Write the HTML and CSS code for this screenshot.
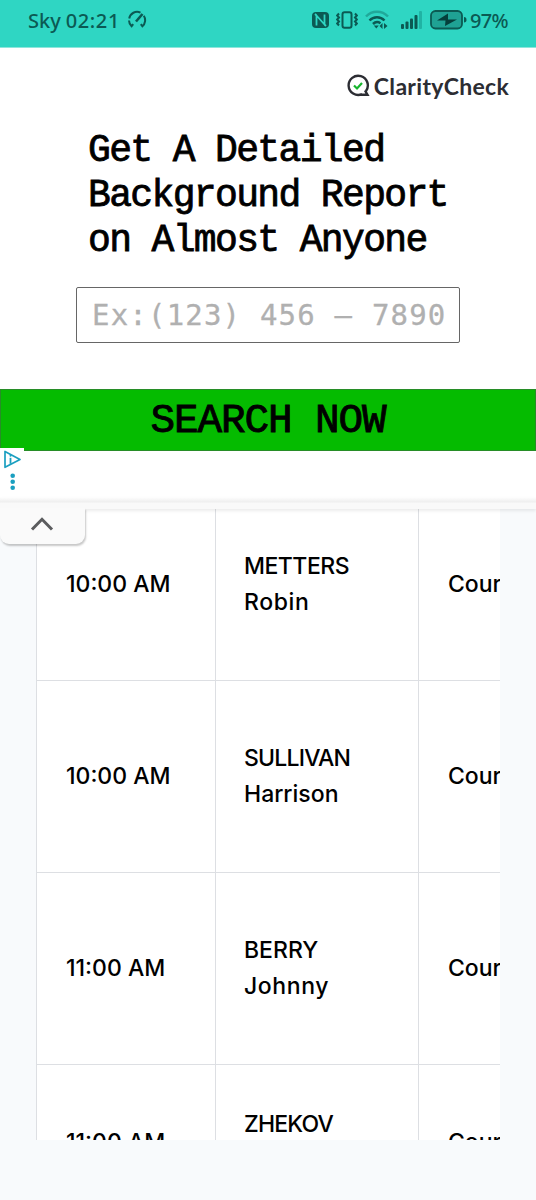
FILE: index.html
```html
<!DOCTYPE html>
<html lang="en">
<head>
    <meta charset="UTF-8">
    <meta name="viewport" content="width=device-width, initial-scale=1.0">
    <title>Court List</title>
    <link rel="stylesheet" href="styles.css">
</head>
<body>
    <div class="status-bar">
        <span class="carrier">Sky</span>
        <span class="clock">02:21</span>
        <svg class="gauge" width="20" height="20" viewBox="0 0 20 20" fill="none" stroke="#0b5a53" stroke-width="2">
            <path d="M13.500 2.600A8 8 0 0 0 2.200 8.500M2 10.500a8 8 0 0 0 2.600 5.700l1.600-2M16.800 5.800a8 8 0 0 1-1.400 10.400l-1.600-2"/>
            <path d="M9 11.500l6.500-7.500" stroke-width="2.600"/>
        </svg>
        <div class="status-icons">
            <svg width="17" height="18" viewBox="0 0 17 18">
                <rect x="0" y="1" width="17" height="16" rx="4" fill="#0b5a53"/>
                <path d="M4.500 14.500V4.500l8 9V3.500M4.500 4.500L3 3M12.500 13.500L14 15" fill="none" stroke="#2fd6c3" stroke-width="1.800"/>
            </svg>
            <svg class="vibrate" width="22" height="18" viewBox="0 0 22 18" fill="none" stroke="#0b5a53" stroke-width="2">
                <rect x="6.500" y="1.300" width="9" height="15.400" rx="2"/>
                <path d="M3 2.500L1.200 4.500 3 6.500 1.200 8.500 3 10.500 1.200 12.500 3 14.500M19 2.500l1.800 2L19 6.500l1.800 2-1.800 2 1.800 2-1.800 2"/>
            </svg>
            <svg class="wifi" width="24" height="20" viewBox="0 0 24 20" fill="none" stroke="#0b5a53" stroke-width="2.500">
                <path d="M1 6.500a15 15 0 0 1 22 0" stroke="#20a99a"/>
                <path d="M4.500 10.500a10.500 10.500 0 0 1 15 0M8 14a6 6 0 0 1 7.500-.8"/>
                <path d="M8.800 15.500h5L11.300 18.500zM17.500 13v6l-3-3zM19 13v6l3.500-3z" fill="#0b5a53" stroke="none"/>
            </svg>
            <svg class="signal" width="22" height="20" viewBox="0 0 22 20" fill="#0b5a53">
                <rect x="0" y="14" width="3" height="5" rx="1"/>
                <rect x="4.500" y="11.500" width="3" height="7.500" rx="1"/>
                <rect x="9" y="8.500" width="3" height="10.500" rx="1"/>
                <rect x="13.500" y="5" width="3" height="14" rx="1"/>
                <rect x="18" y="1" width="3" height="18" rx="1" fill="#20b3a4"/>
            </svg>
            <svg class="battery" width="38" height="20" viewBox="0 0 38 20">
                <rect x="1" y="1" width="31" height="17.500" rx="4.500" fill="#1fa294" stroke="#0b5a53" stroke-width="1.800"/>
                <path d="M34 7q2.500 0 2.500 2.700T34 12.500z" fill="#0b5a53"/>
                <path d="M18 3.500L7 10.500h8.500l-.5 5.500L27 9.500H18z" fill="#053f3b"/>
            </svg>
            <span class="percent">97%</span>
        </div>
    </div>

    <div class="ad">
        <div class="brand">
            <svg width="24" height="24" viewBox="0 0 24 24" fill="none">
                <path d="M16 20.200A9.600 9.600 0 1 1 20 17M14 20.800h7.500L19 16.500" stroke="#2c2d33" stroke-width="2.400"/>
                <path d="M8 11.500l3 3 5-5.500" stroke="#16b52d" stroke-width="2.200"/>
            </svg>
            <span class="brand-name">ClarityCheck</span>
        </div>
        <h1>Get A Detailed<br>Background Report<br>on Almost Anyone</h1>
        <div class="phone-box"><span>Ex:(123) 456 – 7890</span></div>
        <div class="search-button"><span>SEARCH NOW</span></div>
        <div class="ad-info">
            <svg width="24" height="44" viewBox="0 0 24 44">
                <path d="M5 3.500v15.800L20 11.500z" fill="none" stroke="#1a9fc0" stroke-width="1.700" stroke-linejoin="round"/>
                <path d="M10.500 9.800v6" stroke="#1a9fc0" stroke-width="1.800"/>
                <circle cx="10.500" cy="7.700" r="1" fill="#1a9fc0"/>
                <circle cx="12.700" cy="27.700" r="2.300" fill="#1a9fc0"/>
                <circle cx="12.700" cy="33.700" r="2.300" fill="#1a9fc0"/>
                <circle cx="12.700" cy="39.700" r="2.300" fill="#1a9fc0"/>
            </svg>
        </div>
    </div>

    <div class="content">
        <div class="divider"></div>
        <div class="collapse">
            <svg width="24" height="16" viewBox="0 0 24 16">
                <path d="M2 13.500L12 3.300l10 10.200" fill="none" stroke="#5b5c5e" stroke-width="3"/>
            </svg>
        </div>
        <div class="table-wrap">
            <table>
                <tbody>
                    <tr>
                        <td>10:00 AM</td>
                        <td><span class="surname">METTERS</span><br><span class="forename">Robin</span></td>
                        <td>Court</td>
                    </tr>
                    <tr>
                        <td>10:00 AM</td>
                        <td><span class="surname wide">SULLIVAN</span><br><span>Harrison</span></td>
                        <td>Court</td>
                    </tr>
                    <tr>
                        <td>11:00 AM</td>
                        <td><span>BERRY</span><br><span class="forename">Johnny</span></td>
                        <td>Court</td>
                    </tr>
                    <tr class="last">
                        <td>11:00 AM</td>
                        <td><span class="surname wide">ZHEKOV</span><br>&nbsp;</td>
                        <td>Court</td>
                    </tr>
                </tbody>
            </table>
        </div>
    </div>
</body>
</html>
```

FILE: styles.css
```css
* {
    box-sizing: border-box;
}
body {
    margin: 0;
    width: 536px;
    height: 1200px;
    overflow: hidden;
    background-color: #f8fafc;
    font-family: Inter, "Liberation Sans", sans-serif;
}
svg {
    display: block;
    flex: none;
}
.status-bar {
    display: flex;
    align-items: center;
    height: 48px;
    padding: 0 28px 7px;
    background-color: #2fd6c3;
    border-bottom: 1px solid #8ee6dc;
    color: #0b5a53;
    font-family: "Noto Sans", sans-serif;
    font-size: 20px;
    font-weight: 500;
}
.clock {
    margin-left: 5px;
    letter-spacing: 0.6px;
}
.gauge {
    margin-left: 7px;
}
.status-icons {
    display: flex;
    align-items: center;
    margin-left: auto;
}
.vibrate {
    margin-left: 7px;
}
.wifi {
    margin-left: 7px;
}
.signal {
    margin-left: 12px;
}
.battery {
    margin-left: 7px;
}
.percent {
    letter-spacing: -0.6px;
    margin-left: 2px;
}
.ad {
    position: relative;
    height: 454px;
    background-color: #fff;
}
.brand {
    display: flex;
    justify-content: flex-end;
    align-items: center;
    height: 80px;
    padding: 0 27px 4px 0;
    color: #2c2d33;
}
.brand-name {
    margin-left: 4px;
    font-family: Lato, sans-serif;
    font-size: 23px;
    font-weight: 700;
    letter-spacing: 0.3px;
}
h1 {
    margin: 0;
    padding-left: 88px;
    font-family: "Liberation Mono", monospace;
    font-size: 38px;
    line-height: 45px;
    letter-spacing: -1.64px;
    font-weight: 400;
    -webkit-text-stroke: 0.8px #000;
    white-space: nowrap;
}
.phone-box {
    width: 384px;
    height: 56px;
    margin: 24px 0 0 76px;
    padding-left: 15px;
    border: 1px solid #666;
    border-radius: 2px;
    color: #b0b0b0;
    font-family: "DejaVu Sans Mono", monospace;
    font-size: 29px;
    line-height: 54px;
    letter-spacing: 1.2px;
    -webkit-text-stroke: 0.3px #b0b0b0;
    white-space: nowrap;
}
.search-button {
    height: 62px;
    margin-top: 46px;
    border: 1px solid #278d27;
    background-color: #05bb00;
    text-align: center;
    font-family: "Liberation Mono", monospace;
    font-size: 41px;
    line-height: 63px;
    letter-spacing: -1.1px;
    -webkit-text-stroke: 0.9px #000;
}
.ad-info {
    position: absolute;
    left: 0;
    top: 400px;
    background-color: #fff;
}
.content {
    position: relative;
}
.divider {
    position: absolute;
    top: -5px;
    left: 0;
    width: 100%;
    height: 12px;
    z-index: 1;
    background: linear-gradient(#fff, #eee 5px, #f9f9f9 6px);
    box-shadow: 0 2px 3px rgba(0, 0, 0, 0.08);
}
.collapse {
    position: absolute;
    top: 6px;
    left: 0;
    z-index: 2;
    display: flex;
    justify-content: center;
    width: 85px;
    height: 36px;
    padding: 8px 0 0;
    background-color: #fafafa;
    border-radius: 0 0 9px 9px;
    box-shadow: 1px 2px 2px rgba(0, 0, 0, 0.22);
}
.collapse svg {
    margin-right: 2px;
}
.table-wrap {
    width: 464px;
    height: 638px;
    margin-left: 36px;
    overflow: hidden;
    background-color: #fff;
}
table {
    width: 600px;
    table-layout: fixed;
    border-collapse: collapse;
    margin-top: -14px;
}
td {
    height: 192px;
    padding: 0 0 2px 29px;
    border: 1px solid #dddfe3;
    font-size: 23px;
    line-height: 36px;
    font-weight: 500;
    white-space: nowrap;
}
td:nth-child(1) {
    width: 179px;
}
td:nth-child(2) {
    width: 203px;
    padding-left: 28px;
}
.last td {
    height: 156px;
}
.surname {
    letter-spacing: -0.5px;
}
.wide {
    letter-spacing: -0.8px;
}
.forename {
    letter-spacing: 0.6px;
}
```
